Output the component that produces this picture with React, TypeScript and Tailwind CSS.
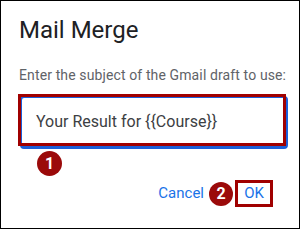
export default function App() {
  return (
    <div className="w-[300px] h-[229px] border border-black bg-white font-['Roboto',sans-serif] relative">
      <div className="pl-[18px] pr-[14px] pt-[15px]">
        <h1 className="text-[24px] leading-[28px] text-[#202124]">Mail Merge</h1>
        <p className="mt-[22px] text-[14px] leading-[18px] tracking-[0.12px] text-[#5f6368] whitespace-nowrap">
          Enter the subject of the Gmail draft to use:
        </p>

        {/* Subject input, focused */}
        <div className="relative mt-[12px] ml-[1px] w-[268px] h-[53px]">
          <div className="h-full rounded-[4px] border-2 border-[#1b5fd9] border-b-[3px] flex items-center pl-[14px] text-[16px] text-[#3c4043]">
            Your Result for {"{{Course}}"}
          </div>
          <div className="absolute left-[-2px] top-[-2px] w-[268px] h-[52px] border-[3px] border-[#a00000]" />
        </div>

        <div className="mt-[2px] ml-[18px] w-[25px] h-[25px] rounded-full bg-[#9b0a0a] text-white text-[16px] font-bold flex items-center justify-center">
          1
        </div>

        <div className="mt-[4px] flex items-center justify-end pr-[12px]">
          <button className="text-[15px] text-[#1a73e8]">Cancel</button>
          <div className="ml-[5px] w-[24px] h-[24px] rounded-full bg-[#9b0a0a] text-white text-[16px] font-bold flex items-center justify-center">
            2
          </div>
          <button className="ml-[2px] w-[38px] h-[27px] border-[3px] border-[#a00000] text-[15px] text-[#1a73e8] flex items-center justify-center">
            OK
          </button>
        </div>
      </div>
    </div>
  );
}
